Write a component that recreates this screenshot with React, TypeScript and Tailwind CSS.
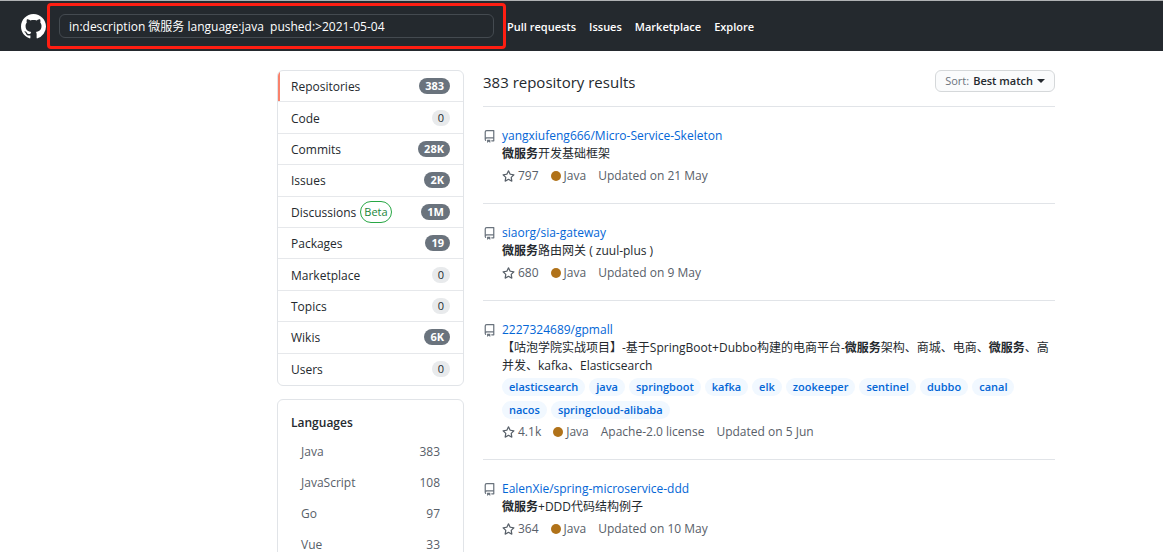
import React from "react";

const filters = [
  { name: "Repositories", count: "383", active: true },
  { name: "Code", count: "0" },
  { name: "Commits", count: "28K" },
  { name: "Issues", count: "2K" },
  { name: "Discussions", count: "1M", beta: true },
  { name: "Packages", count: "19" },
  { name: "Marketplace", count: "0" },
  { name: "Topics", count: "0" },
  { name: "Wikis", count: "6K" },
  { name: "Users", count: "0" },
];

const languages = [
  ["Java", "383"],
  ["JavaScript", "108"],
  ["Go", "97"],
  ["Vue", "33"],
];

type Repo = {
  name: string;
  description: React.ReactNode;
  tags?: string[];
  stars: string;
  license?: string;
  updated: string;
};

const Match = () => <em className="font-bold not-italic">微服务</em>;

const repos: Repo[] = [
  {
    name: "yangxiufeng666/Micro-Service-Skeleton",
    description: <><Match />开发基础框架</>,
    stars: "797",
    updated: "21 May",
  },
  {
    name: "siaorg/sia-gateway",
    description: <><Match />路由网关 ( zuul-plus )</>,
    stars: "680",
    updated: "9 May",
  },
  {
    name: "2227324689/gpmall",
    description: (
      <>
        【咕泡学院实战项目】-基于SpringBoot+Dubbo构建的电商平台-<Match />架构、商城、电商、<Match />、高并发、kafka、Elasticsearch
      </>
    ),
    tags: ["elasticsearch", "java", "springboot", "kafka", "elk", "zookeeper", "sentinel", "dubbo", "canal", "nacos", "springcloud-alibaba"],
    stars: "4.1k",
    license: "Apache-2.0 license",
    updated: "5 Jun",
  },
  {
    name: "EalenXie/spring-microservice-ddd",
    description: <><Match />+DDD代码结构例子</>,
    stars: "364",
    updated: "10 May",
  },
];

function Mark() {
  return (
    <svg viewBox="0 0 16 16" className="size-[25px] fill-white" aria-hidden="true">
      <path d="M8 0C3.58 0 0 3.58 0 8c0 3.54 2.29 6.53 5.47 7.59.4.07.55-.17.55-.38 0-.19-.01-.82-.01-1.49-2.01.37-2.53-.49-2.69-.94-.09-.23-.48-.94-.82-1.13-.28-.15-.68-.52-.01-.53.63-.01 1.08.58 1.23.82.72 1.21 1.87.87 2.33.66.07-.52.28-.87.51-1.07-1.78-.2-3.64-.89-3.64-3.95 0-.87.31-1.59.82-2.15-.08-.2-.36-1.02.08-2.12 0 0 .67-.21 2.2.82.64-.18 1.32-.27 2-.27s1.36.09 2 .27c1.53-1.04 2.2-.82 2.2-.82.44 1.1.16 1.92.08 2.12.51.56.82 1.27.82 2.15 0 3.07-1.87 3.75-3.65 3.95.29.25.54.73.54 1.48 0 1.07-.01 1.93-.01 2.2 0 .21.15.46.55.38A8.01 8.01 0 0 0 16 8c0-4.42-3.58-8-8-8z" />
    </svg>
  );
}

function RepoIcon() {
  return (
    <svg viewBox="0 0 16 16" className="mt-1 mr-[6px] size-[13px] shrink-0 fill-[#6a737d]" aria-hidden="true">
      <path
        fillRule="evenodd"
        d="M2 2.5A2.5 2.5 0 0 1 4.5 0h8.75a.75.75 0 0 1 .75.75v12.5a.75.75 0 0 1-.75.75h-2.5a.75.75 0 0 1 0-1.5h1.75v-2h-8a1 1 0 0 0-.714 1.7.75.75 0 0 1-1.072 1.05A2.495 2.495 0 0 1 2 11.5v-9zm10.5-1V9h-8c-.356 0-.694.074-1 .208V2.5a1 1 0 0 1 1-1h8zM5 12.25v3.25a.25.25 0 0 0 .4.2l1.45-1.087a.25.25 0 0 1 .3 0L8.6 15.7a.25.25 0 0 0 .4-.2v-3.25a.25.25 0 0 0-.25-.25h-3.5a.25.25 0 0 0-.25.25z"
      />
    </svg>
  );
}

function StarIcon() {
  return (
    <svg viewBox="0 0 16 16" className="size-[13px] fill-current" aria-hidden="true">
      <path
        fillRule="evenodd"
        d="M8 .25a.75.75 0 0 1 .673.418l1.882 3.815 4.21.612a.75.75 0 0 1 .416 1.279l-3.046 2.97.719 4.192a.75.75 0 0 1-1.088.791L8 12.347l-3.766 1.98a.75.75 0 0 1-1.088-.79l.72-4.194L.818 6.374a.75.75 0 0 1 .416-1.28l4.21-.611L7.327.668A.75.75 0 0 1 8 .25zm0 2.445L6.615 5.5a.75.75 0 0 1-.564.41l-3.097.45 2.24 2.184a.75.75 0 0 1 .216.664l-.528 3.084 2.769-1.456a.75.75 0 0 1 .698 0l2.77 1.456-.53-3.084a.75.75 0 0 1 .216-.664l2.24-2.183-3.096-.45a.75.75 0 0 1-.564-.41L8 2.694v.001z"
      />
    </svg>
  );
}

function Header() {
  return (
    <header className="flex h-[51px] items-center border-t border-[#b0b2b4] bg-[#24292e] pl-[21px]">
      <a href="#" aria-label="GitHub"><Mark /></a>
      <form className="ml-px w-[459px] rounded-sm border-3 border-[#ff1e12] px-[9px] py-[8px]">
        <input
          aria-label="Search"
          defaultValue="in:description 微服务 language:java  pushed:>2021-05-04"
          className="block h-6 w-full rounded-md border border-[#444a50] bg-transparent px-[9px] text-[12px] text-white outline-none"
        />
      </form>
      <nav className="flex gap-[13px] pt-0.5 pl-px text-[11px] font-semibold whitespace-nowrap text-white">
        {["Pull requests", "Issues", "Marketplace", "Explore"].map((t) => (
          <a key={t} href="#">{t}</a>
        ))}
      </nav>
    </header>
  );
}

function Sidebar() {
  return (
    <aside className="w-[187px] shrink-0">
      <nav className="grid min-h-[316px] auto-rows-fr overflow-hidden rounded-md border border-[#e1e4e8]">
        {filters.map((f) => (
          <a
            key={f.name}
            href="#"
            className="relative flex items-center border-b border-[#e6e8eb] px-[13px] last:border-b-0"
          >
            {f.active && <span className="absolute inset-y-0 left-0 w-0.5 bg-[#f9826c]" />}
            <span className="pt-0.5">{f.name}</span>
            {f.beta && (
              <span className="ml-1 rounded-full border border-[#28a745] px-[3px] text-[11px] leading-5 text-[#22863a]">Beta</span>
            )}
            <span
              className={
                f.count === "0"
                  ? "ml-auto rounded-full bg-[#e8eaec] px-1.5 text-[11px] leading-4"
                  : "ml-auto rounded-full bg-[#6a737d] px-1.5 text-[11px] leading-4 font-bold text-white"
              }
            >
              {f.count}
            </span>
          </a>
        ))}
      </nav>
      <section className="mt-[13px] rounded-md border border-[#e1e4e8] px-[13px] pt-[14px] pb-3">
        <h2 className="font-semibold">Languages</h2>
        <ul className="mt-1 text-[#586069]">
          {languages.map(([name, n]) => (
            <li key={name}>
              <a href="#" className="flex h-[31px] items-center justify-between px-[10px]">
                <span>{name}</span>
                <span>{n}</span>
              </a>
            </li>
          ))}
        </ul>
      </section>
    </aside>
  );
}

function RepoItem({ repo }: { repo: Repo }) {
  return (
    <li className="flex border-t border-[#e1e4e8] pt-[19px] pb-[18px]">
      <RepoIcon />
      <div className="min-w-0 flex-1">
        <a href="#" className="block leading-[19px] text-[#0366d6]">{repo.name}</a>
        <p>{repo.description}</p>
        {repo.tags && (
          <div className="mt-[3px] flex flex-wrap gap-x-1 gap-y-[5px] pr-8">
            {repo.tags.map((t) => (
              <a key={t} href="#" className="rounded-full bg-[#f1f8ff] px-[7px] text-[11px] font-semibold text-[#0366d6]">
                {t}
              </a>
            ))}
          </div>
        )}
        <div className="mt-1 flex gap-3 text-[#586069]">
          <a href="#" className="flex items-center gap-[3px]"><StarIcon />{repo.stars}</a>
          <span className="flex items-center gap-[3px]">
            <span className="size-[10px] rounded-full bg-[#b07219]" />
            Java
          </span>
          {repo.license && <span>{repo.license}</span>}
          <span>Updated on {repo.updated}</span>
        </div>
      </div>
    </li>
  );
}

export default function App() {
  return (
    <div className="h-screen overflow-hidden bg-white font-['Open_Sans','Noto_Sans_CJK_SC',sans-serif] text-[12px] leading-[18px] text-[#24292e]">
      <Header />
      <div className="flex items-start gap-[19px] pt-[19px] pr-[108px] pl-[277px]">
        <Sidebar />
        <main className="min-w-0 flex-1">
          <div className="flex items-start justify-between pb-3">
            <h1 className="text-[15px] leading-6 font-medium">383 repository results</h1>
            <button className="flex h-[22px] items-center rounded-md border border-[#d5d8da] bg-[#fafbfc] px-[9px] text-[11px] font-semibold">
              <span className="mr-1 font-medium text-[#6a737d]">Sort:</span>Best match
              <span className="ml-1 border-x-4 border-t-4 border-x-transparent border-t-[#24292e]" />
            </button>
          </div>
          <ul>
            {repos.map((r) => (
              <RepoItem key={r.name} repo={r} />
            ))}
          </ul>
        </main>
      </div>
    </div>
  );
}
